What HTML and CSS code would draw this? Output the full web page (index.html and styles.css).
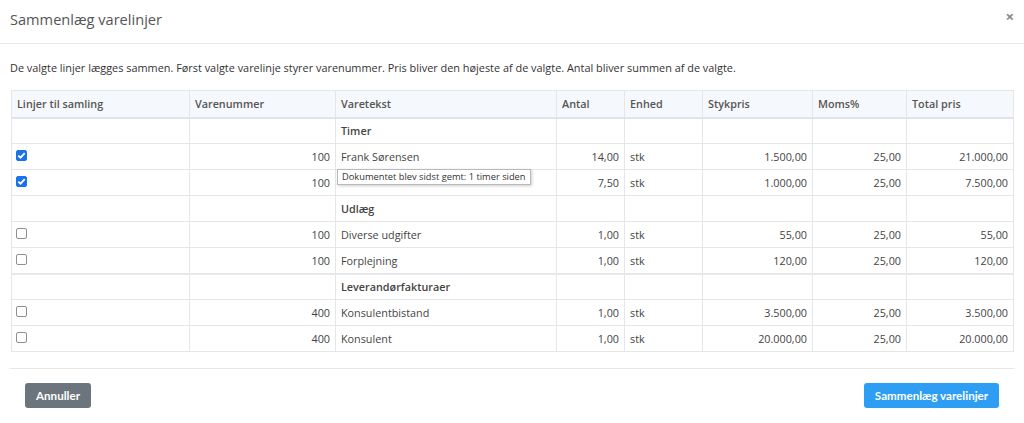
FILE: index.html
```html
<!DOCTYPE html>
<html lang="da">
<head>
<meta charset="utf-8">
<title>Sammenlæg varelinjer</title>
<link rel="stylesheet" href="styles.css">
</head>
<body>
<div class="modal">
  <div class="modal-header">
    <h1 class="modal-title">Sammenlæg varelinjer</h1>
    <span class="close">×</span>
  </div>
  <div class="modal-body">
    <p class="desc">De valgte linjer lægges sammen. Først valgte varelinje styrer varenummer. Pris bliver den højeste af de valgte. Antal bliver summen af de valgte.</p>
    <table class="grid">
      <colgroup>
        <col class="c1"><col class="c2"><col class="c3"><col class="c4"><col class="c5"><col class="c6"><col class="c7"><col class="c8">
      </colgroup>
      <thead>
        <tr><th>Linjer til samling</th><th>Varenummer</th><th>Varetekst</th><th>Antal</th><th>Enhed</th><th>Stykpris</th><th>Moms%</th><th>Total pris</th></tr>
      </thead>
      <tbody>
        <tr class="group"><td></td><td></td><td>Timer</td><td></td><td></td><td></td><td></td><td></td></tr>
        <tr><td class="chk"><span class="cb on"></span></td><td class="num">100</td><td>Frank Sørensen</td><td class="num">14,00</td><td>stk</td><td class="num">1.500,00</td><td class="num">25,00</td><td class="num">21.000,00</td></tr>
        <tr><td class="chk"><span class="cb on"></span></td><td class="num">100</td><td class="tipcell"><span class="tip">Dokumentet blev sidst gemt: 1 timer siden</span></td><td class="num">7,50</td><td>stk</td><td class="num">1.000,00</td><td class="num">25,00</td><td class="num">7.500,00</td></tr>
        <tr class="group"><td></td><td></td><td>Udlæg</td><td></td><td></td><td></td><td></td><td></td></tr>
        <tr><td class="chk"><span class="cb"></span></td><td class="num">100</td><td>Diverse udgifter</td><td class="num">1,00</td><td>stk</td><td class="num">55,00</td><td class="num">25,00</td><td class="num">55,00</td></tr>
        <tr><td class="chk"><span class="cb"></span></td><td class="num">100</td><td>Forplejning</td><td class="num">1,00</td><td>stk</td><td class="num">120,00</td><td class="num">25,00</td><td class="num">120,00</td></tr>
        <tr class="group sep"><td></td><td></td><td>Leverandørfakturaer</td><td></td><td></td><td></td><td></td><td></td></tr>
        <tr><td class="chk"><span class="cb"></span></td><td class="num">400</td><td>Konsulentbistand</td><td class="num">1,00</td><td>stk</td><td class="num">3.500,00</td><td class="num">25,00</td><td class="num">3.500,00</td></tr>
        <tr><td class="chk"><span class="cb"></span></td><td class="num">400</td><td>Konsulent</td><td class="num">1,00</td><td>stk</td><td class="num">20.000,00</td><td class="num">25,00</td><td class="num">20.000,00</td></tr>
      </tbody>
    </table>
  </div>
  <div class="modal-footer">
    <button class="btn btn-gray">Annuller</button>
    <button class="btn btn-blue">Sammenlæg varelinjer</button>
  </div>
</div>
</body>
</html>
```
FILE: styles.css
```css
* { box-sizing: border-box; }
html, body { margin: 0; padding: 0; background: #fff; }
body {
  font-family: "Open Sans", "Liberation Sans", sans-serif;
  color: #333;
  width: 1024px;
  height: 423px;
  overflow: hidden;
}
.modal { width: 1024px; }
.modal-header {
  height: 44px;
  display: flex;
  align-items: center;
  justify-content: space-between;
  padding: 0 10px 6px 10px;
  border-bottom: 1px solid #e8e8e8;
}
.modal-title {
  margin: 0;
  font-size: 14.6px;
  font-weight: 400;
  color: #555;
}
.close {
  font-size: 15px;
  color: #888;
  font-weight: 700;
  margin-right: 0;
  margin-top: -6px;
}
.modal-body { padding: 0 11px 0 11px; }
.desc {
  margin: 16px 0 0 -1px;
  font-size: 10.9px;
  line-height: 16px;
  color: #333;
}
.grid {
  margin-top: 14px;
  width: 1002px;
  table-layout: fixed;
  border-collapse: collapse;
  font-size: 10.8px;
  color: #444;
}
.c1 { width: 178px; } .c2 { width: 146px; } .c3 { width: 221px; } .c4 { width: 68px; }
.c5 { width: 78px; } .c6 { width: 110px; } .c7 { width: 94px; } .c8 { width: 107px; }
.grid th, .grid td {
  border: 1px solid #e4e7ea;
  padding: 0 5px;
  height: 26px;
  white-space: nowrap;
  text-align: left;
  vertical-align: middle;
}
.grid th {
  height: 27px;
  background: #f5f8fc;
  font-weight: 600;
  color: #555;
  border-bottom: 2px solid #e0e4e8;
}
.grid td.num { text-align: right; padding-right: 5px; }
.grid tr.group td { font-weight: 600; color: #444; }
.grid tr.sep td { border-top: 2px solid #e6e8eb; }
.grid td.chk { vertical-align: top; padding-top: 6px; }
.cb {
  display: block;
  width: 11px;
  height: 11px;
  border: 1px solid #8f8f8f;
  border-radius: 2px;
  background: #fff;
  margin-left: -1px;
}
.cb.on {
  border-color: #1a73e8;
  background: #1a73e8 url("data:image/svg+xml,%3Csvg xmlns='http://www.w3.org/2000/svg' viewBox='0 0 11 11'%3E%3Cpath d='M2.3 5.6 L4.5 7.7 L8.7 3.2' fill='none' stroke='white' stroke-width='1.8'/%3E%3C/svg%3E") center/11px 11px no-repeat;
}
.tipcell { position: relative; }
.tip {
  position: absolute;
  left: 1px;
  top: -1px;
  height: 16px;
  padding: 0 4px;
  line-height: 14px;
  font-size: 9.3px;
  color: #333;
  background: #fff;
  border: 1px solid #b9b9b9;
  box-shadow: 1px 1px 3px rgba(0,0,0,0.2);
  white-space: nowrap;
}
.modal-footer {
  margin: 16px 10px 0 10px;
  border-top: 1px solid #e6e6e6;
  padding: 14px 15px 0 15px;
  display: flex;
  justify-content: space-between;
}
.btn {
  font-family: Lato, "Open Sans", sans-serif;
  font-size: 11.6px;
  font-weight: 700;
  height: 25px;
  border: none;
  border-radius: 3px;
  color: #fff;
  padding: 0;
  white-space: nowrap;
  cursor: pointer;
}
.btn-gray { background: #6c757d; width: 66px; }
.btn-blue { background: #2e9df4; width: 135px; }
```
